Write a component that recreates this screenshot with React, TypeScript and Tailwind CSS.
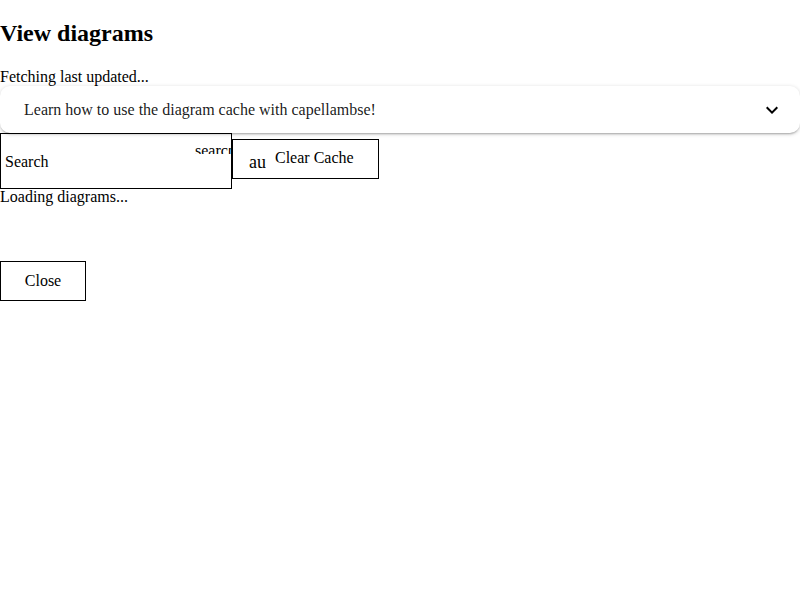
export default function App() {
  return (
    <div className="min-h-[600px] bg-white font-['Liberation_Serif',serif] text-[16px] leading-normal text-black">
      <h2 className="pt-[15px] text-[24px] font-bold leading-normal">View diagrams</h2>
      <p className="relative mt-[14px] -mb-[3px]">Fetching last updated...</p>

      <div className="relative flex h-[47px] items-center justify-between rounded-[10px] bg-white pl-[24px] pr-[16px] shadow-[0_2px_2px_-1px_rgba(0,0,0,0.25),0_1px_4px_0_rgba(0,0,0,0.18)]">
        <span className="text-black/90">Learn how to use the diagram cache with capellambse!</span>
        <svg width="24" height="24" viewBox="0 0 24 24" className="fill-black">
          <path d="M16.59 8.59 12 13.17 7.41 8.59 6 10l6 6 6-6z" />
        </svg>
      </div>

      <div className="flex items-start">
        <div className="relative flex h-[56px] w-[232px] items-center border border-black pl-[4px]">
          <span className="mt-[1px]">Search</span>
          <div className="absolute left-[194px] top-[14px] h-[6px] w-[36px] overflow-hidden">
            <span className="-mt-[9px] block whitespace-nowrap">search</span>
          </div>
        </div>
        <button className="mt-[6px] flex h-[40px] items-center border border-black bg-white pl-[16px] pr-[24px]">
          <span className="mt-[5px] w-[17px] overflow-hidden whitespace-nowrap text-[18px] leading-none">autorenew</span>
          <span className="ml-[9px] -mt-[2px]">Clear Cache</span>
        </button>
      </div>

      <p className="-mt-[4px]">Loading diagrams...</p>

      <button className="mt-[52px] flex h-[40px] w-[86px] items-center justify-center border border-black bg-white">
        Close
      </button>
    </div>
  );
}
